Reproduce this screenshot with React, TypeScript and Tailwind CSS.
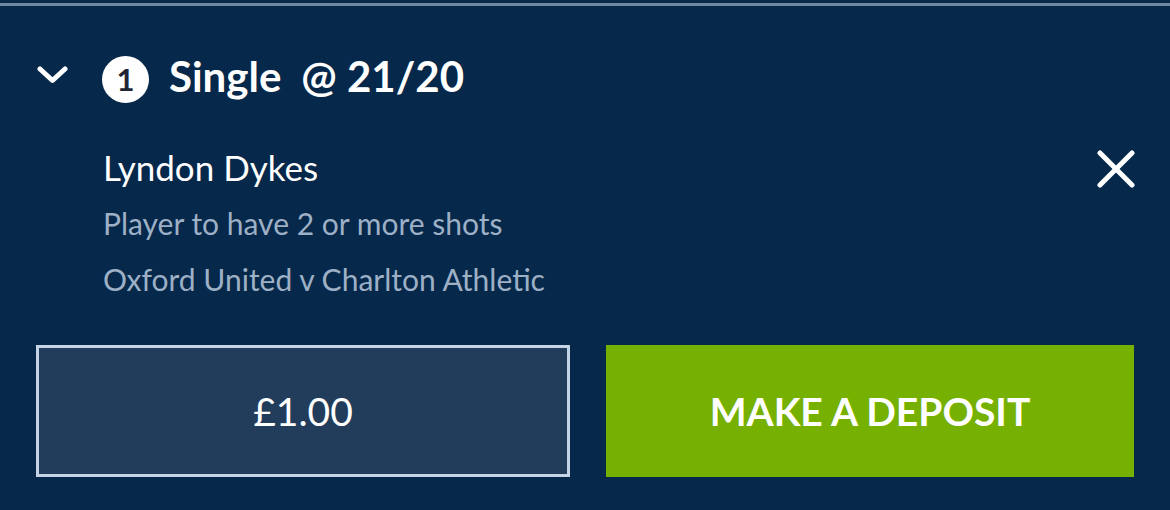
export default function App() {
  return (
    <div className="h-[510px] w-[1170px] overflow-hidden bg-[#06284a] font-['Lato',sans-serif] text-white">
      <div className="h-[3px] bg-[#0b2a4a]" />
      <div className="h-[3px] bg-[#6f87a1]" />

      {/* header row */}
      <div className="mt-[50px] flex h-[48px] items-start pl-[37px]">
        <svg width="31" height="18" viewBox="0 0 31 18" className="mt-[10px]" fill="none">
          <polyline points="3,3 15.5,14.5 28,3" stroke="white" strokeWidth="5" strokeLinecap="round" strokeLinejoin="round" />
        </svg>
        <div className="ml-[34px] flex h-[47px] w-[47px] items-center justify-center rounded-full bg-white pb-[1px] text-[31px] font-bold leading-none text-[#1f2535]">
          1
        </div>
        <div className="ml-[20px] flex h-[48px] items-center gap-[20px] pb-[9px] text-[42px] font-bold leading-none">
          <span>Single</span>
          <span>@ 21/20</span>
        </div>
      </div>

      {/* selection */}
      <div className="mt-[41px] flex pl-[103px] pr-[35px]">
        <div className="flex-1">
          <div className="text-[35px] leading-[44px]">Lyndon Dykes</div>
          <div className="mt-[16px] text-[30px] leading-[36px] text-[#9db0c6]">Player to have 2 or more shots</div>
          <div className="mt-[20px] text-[30px] leading-[36px] text-[#9db0c6]">Oxford United v Charlton Athletic</div>
        </div>
        <svg width="38" height="38" viewBox="0 0 38 38" className="mt-[5px]" fill="none">
          <line x1="3" y1="3" x2="35" y2="35" stroke="white" strokeWidth="5" strokeLinecap="round" />
          <line x1="35" y1="3" x2="3" y2="35" stroke="white" strokeWidth="5" strokeLinecap="round" />
        </svg>
      </div>

      {/* stake + action */}
      <div className="mt-[48px] flex gap-[36px] px-[36px]">
        <div className="flex h-[132px] flex-1 items-center justify-center border-[3px] border-[#c5d4e4] bg-[#213d5b] text-[39px]">
          £1.00
        </div>
        <button className="flex h-[132px] flex-1 items-center justify-center bg-[#76b000] text-[39px] font-bold text-white">
          MAKE A DEPOSIT
        </button>
      </div>
    </div>
  );
}
